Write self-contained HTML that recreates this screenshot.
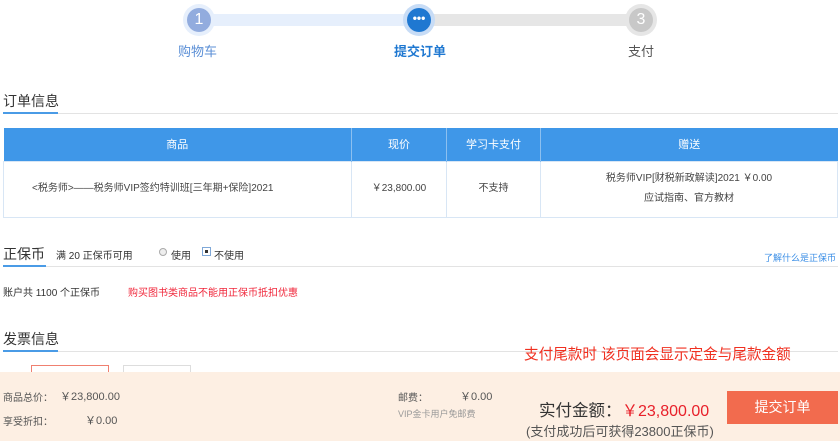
<!DOCTYPE html>
<html><head><meta charset="utf-8"><style>
*{margin:0;padding:0;box-sizing:border-box}
body{width:840px;height:441px;position:relative;overflow:hidden;background:#fff;font-family:"Liberation Sans","Noto Sans CJK SC",sans-serif;color:#333}
.a{position:absolute;white-space:nowrap}
.c{position:absolute;border-radius:50%;text-align:center;color:#fff}
table{position:absolute;left:3px;top:128px;width:835px;border-collapse:collapse;font-size:10px}
th{background:#3f97e8;color:#fff;font-weight:normal;height:33px;border-right:1px solid #8cc0f0;font-size:11px}
td{height:56px;text-align:center;border:1px solid #d8e6f5;color:#444;line-height:20px}
</style></head><body>
<div class="a" style="left:199px;top:14px;width:220px;height:12px;background:#e6effc"></div>
<div class="a" style="left:419px;top:14px;width:222px;height:12px;background:#e6e6e6"></div>
<div class="c" style="left:183px;top:4px;width:32px;height:32px;background:#e6effc"></div>
<div class="c" style="left:187px;top:8px;width:24px;height:24px;background:#92acde;font-size:16px;line-height:24px">1</div>
<div class="c" style="left:403px;top:4px;width:32px;height:32px;background:#c7dcf6"></div>
<div class="c" style="left:407px;top:8px;width:24px;height:24px;background:#1f78d1;font-size:12px;line-height:20px;font-weight:bold">•••</div>
<div class="c" style="left:625px;top:4px;width:32px;height:32px;background:#e6e6e6"></div>
<div class="c" style="left:629px;top:8px;width:24px;height:24px;background:#c8c8c8;font-size:16px;line-height:24px">3</div>
<div class="a" style="left:178px;top:41px;font-size:13px;color:#5b8fd6">购物车</div>
<div class="a" style="left:394px;top:41px;font-size:13px;color:#1f78d1;font-weight:bold">提交订单</div>
<div class="a" style="left:628px;top:41px;font-size:13px;color:#555">支付</div>

<div class="a" style="left:3px;top:91px;font-size:14px;color:#333">订单信息</div>
<div class="a" style="left:3px;top:113px;width:835px;height:1px;background:#e3e3e3"></div>
<div class="a" style="left:3px;top:112px;width:55px;height:2px;background:#4a9be6"></div>
<table><tr><th style="width:348px">商品</th><th style="width:95px">现价</th><th style="width:94px">学习卡支付</th><th style="border-right:0">赠送</th></tr>
<tr><td style="text-align:left;padding-left:28px">&lt;税务师&gt;——税务师VIP签约特训班[三年期+保险]2021</td><td>￥23,800.00</td><td>不支持</td><td>税务师VIP[财税新政解读]2021 ￥0.00<br>应试指南、官方教材</td></tr></table>

<div class="a" style="left:3px;top:244px;font-size:14px">正保币</div>
<div class="a" style="left:56px;top:247px;font-size:10px">满 20 正保币可用</div>
<div class="a" style="left:159px;top:248px;width:8px;height:8px;border-radius:50%;border:1px solid #aaa;background:#eee"></div>
<div class="a" style="left:171px;top:247px;font-size:10px">使用</div>
<div class="a" style="left:202px;top:247px;width:9px;height:9px;border:1px solid #7fa8d8;background:#fff"><div style="margin:2px;width:3px;height:3px;background:#333"></div></div>
<div class="a" style="left:214px;top:247px;font-size:10px">不使用</div>
<div class="a" style="left:764px;top:251px;font-size:9px;color:#3a8ee6">了解什么是正保币</div>
<div class="a" style="left:3px;top:266px;width:835px;height:1px;background:#e3e3e3"></div>
<div class="a" style="left:3px;top:265px;width:43px;height:2px;background:#4a9be6"></div>
<div class="a" style="left:3px;top:284px;font-size:10px">账户共 1100 个正保币</div>
<div class="a" style="left:128px;top:284px;font-size:10px;color:#f0283c">购买图书类商品不能用正保币抵扣优惠</div>

<div class="a" style="left:3px;top:329px;font-size:14px">发票信息</div>
<div class="a" style="left:3px;top:351px;width:835px;height:1px;background:#e3e3e3"></div>
<div class="a" style="left:3px;top:350px;width:55px;height:2px;background:#4a9be6"></div>
<div class="a" style="left:524px;top:343px;font-size:14.6px;color:#f03020">支付尾款时 该页面会显示定金与尾款金额</div>
<div class="a" style="left:31px;top:365px;width:78px;height:12px;border:1px solid #f08070"></div>
<div class="a" style="left:123px;top:365px;width:68px;height:12px;border:1px solid #ddd"></div>

<div class="a" style="left:0;top:372px;width:840px;height:69px;background:#fdefe3"></div>
<div class="a" style="left:3px;top:389px;font-size:10px;color:#555">商品总价：</div>
<div class="a" style="left:60px;top:388px;font-size:11px;color:#555">￥23,800.00</div>
<div class="a" style="left:3px;top:413px;font-size:10px;color:#555">享受折扣：</div>
<div class="a" style="left:85px;top:412px;font-size:11px;color:#555">￥0.00</div>
<div class="a" style="left:398px;top:389px;font-size:10px;color:#555">邮费：</div>
<div class="a" style="left:460px;top:388px;font-size:11px;color:#555">￥0.00</div>
<div class="a" style="left:398px;top:407px;font-size:9px;color:#999">VIP金卡用户免邮费</div>
<div class="a" style="left:539px;top:397px;font-size:16.5px;color:#333">实付金额：</div>
<div class="a" style="left:622px;top:397px;font-size:16px;color:#e8202a">￥23,800.00</div>
<div class="a" style="left:526px;top:421px;font-size:13px;color:#555">(支付成功后可获得23800正保币)</div>
<div class="a" style="left:727px;top:391px;width:111px;height:33px;background:#f26b4e;color:#fff;font-size:14px;line-height:33px;text-align:center">提交订单</div>
</body></html>
